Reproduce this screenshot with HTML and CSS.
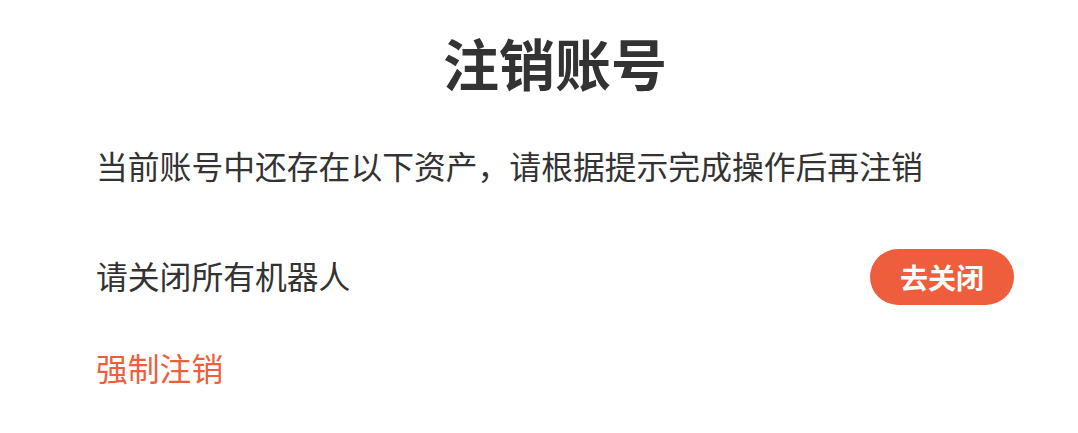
FILE: index.html
```html
<!DOCTYPE html>
<html lang="zh">
    <head>
        <meta charset="UTF-8" />
        <meta name="viewport" content="width=device-width, initial-scale=1.0" />
        <title>注销账号</title>
        <link rel="stylesheet" href="styles.css">
    </head>
    <body>
        <div class="page">
            <h1 class="title">注销账号</h1>
            <p class="desc">当前账号中还存在以下资产，请根据提示完成操作后再注销</p>

            <div class="asset-row">
                <span class="asset-text">请关闭所有机器人</span>
                <a class="button" href="#">去关闭</a>
            </div>

            <a class="force-link" href="#">强制注销</a>
        </div>
    </body>
</html>
```

FILE: styles.css
```css
body {
    margin: 0;
    background: #ffffff;
    font-family: "Noto Sans CJK SC", "Noto Sans", sans-serif;
    color: #333333;
}
.page {
    padding: 22px 64px 0 96px;
}
.title {
    margin: 0;
    font-size: 56px;
    line-height: 80px;
    font-weight: 700;
    text-align: center;
    color: #333333;
}
.desc {
    margin: 39px 0 0;
    font-size: 31.8px;
    line-height: 48px;
}
.asset-row {
    margin-top: 60px;
    height: 56px;
    display: flex;
    align-items: center;
    justify-content: space-between;
}
.asset-text {
    font-size: 31.8px;
    line-height: 44px;
    padding-bottom: 4px;
}
.button {
    display: inline-block;
    height: 56px;
    line-height: 56px;
    padding: 0 30px;
    border-radius: 28px;
    background: #ee5e3c;
    color: #ffffff;
    font-size: 28px;
    font-weight: 700;
    text-decoration: none;
}
.force-link {
    display: block;
    margin-top: 38px;
    font-size: 31.8px;
    line-height: 48px;
    color: #ee5e3c;
    text-decoration: none;
}
```
